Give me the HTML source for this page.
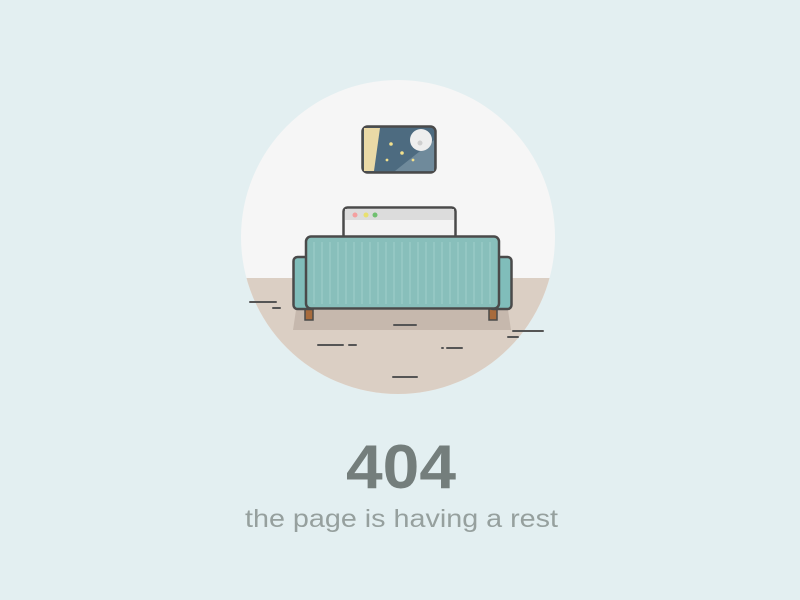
<!DOCTYPE html>
<html><head><meta charset="utf-8"><style>
html,body{margin:0;padding:0;background:#e3eff1;width:800px;height:600px;overflow:hidden}
</style></head><body>
<svg width="800" height="600" viewBox="0 0 800 600" xmlns="http://www.w3.org/2000/svg">
<defs><clipPath id="c"><circle cx="398" cy="237" r="157"/></clipPath></defs>
<rect width="800" height="600" fill="#e3eff1"/>
<g clip-path="url(#c)">
<rect x="230" y="70" width="340" height="340" fill="#f6f6f6"/>
<rect x="230" y="278" width="340" height="130" fill="#dbcfc4"/>
</g>
<polygon points="296,310 508,310 511,330 293,330" fill="#c6b8ad"/>
<rect x="362.5" y="126.5" width="73" height="46" rx="5" fill="#4d6b80" stroke="#4a4a4a" stroke-width="2.5"/>
<polygon points="364,128 380,128 374,171 364,171" fill="#ead9a6"/>
<polygon points="395,171 434,140 434,171" fill="#6f8a9b"/>
<circle cx="421" cy="140" r="11" fill="#eeeeee"/>
<circle cx="420" cy="143" r="2.5" fill="#cfcfcf"/>
<circle cx="391" cy="144" r="1.8" fill="#f2e08c"/><circle cx="402" cy="153" r="1.8" fill="#f2e08c"/>
<circle cx="387" cy="160" r="1.4" fill="#f2e08c"/><circle cx="413" cy="160" r="1.4" fill="#f2e08c"/>
<rect x="343.5" y="207.5" width="112" height="40" rx="4" fill="#f3f3f3" stroke="#4a4a4a" stroke-width="2.5"/>
<rect x="345" y="209" width="109" height="11" fill="#dcdcdc"/>
<circle cx="355" cy="215" r="2.5" fill="#f4a0a0"/><circle cx="366" cy="215" r="2.5" fill="#e8e070"/><circle cx="375" cy="215" r="2.5" fill="#70c070"/>
<rect x="305" y="306" width="8" height="14" fill="#a86b3c" stroke="#4a4a4a" stroke-width="1.5"/>
<rect x="489" y="306" width="8" height="14" fill="#a86b3c" stroke="#4a4a4a" stroke-width="1.5"/>
<rect x="293.5" y="257" width="22" height="52" rx="4" fill="#80bdba" stroke="#4a4a4a" stroke-width="2.5"/>
<rect x="489.5" y="257" width="22" height="52" rx="4" fill="#80bdba" stroke="#4a4a4a" stroke-width="2.5"/>
<rect x="306" y="236.5" width="193" height="72" rx="5" fill="#88bfbb" stroke="#4a4a4a" stroke-width="2.5"/>
<g stroke="#9fcfcb" stroke-width="1">
<path d="M314 242V304M322 242V304M330 242V304M338 242V304M346 242V304M354 242V304M362 242V304M370 242V304M378 242V304M386 242V304M394 242V304M402 242V304M410 242V304M418 242V304M426 242V304M434 242V304M442 242V304M450 242V304M458 242V304M466 242V304M474 242V304M482 242V304M490 242V304"/>
</g>
<g stroke="#555" stroke-width="2" stroke-linecap="round">
<path d="M250 302H276M273 308H280M394 325H416M513 331H543M508 337H518M318 345H343M349 345H356M442 348H443M447 348H462M393 377H417"/>
</g>
<text x="401" y="488" text-anchor="middle" font-family="Liberation Sans, sans-serif" font-weight="bold" font-size="62" fill="#747e7c" textLength="110" lengthAdjust="spacingAndGlyphs">404</text>
<text x="401.5" y="527" text-anchor="middle" font-family="Liberation Sans, sans-serif" font-size="25" fill="#96a09e" textLength="313" lengthAdjust="spacingAndGlyphs">the page is having a rest</text>
</svg>
</body></html>
